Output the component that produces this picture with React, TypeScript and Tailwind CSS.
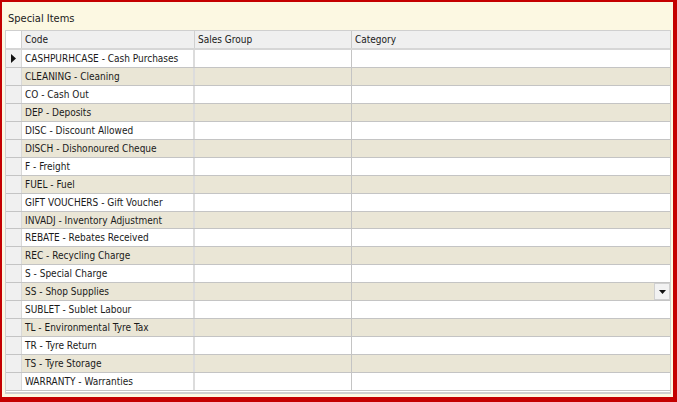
import React from "react";

const ROWS = [
  "CASHPURHCASE - Cash Purchases",
  "CLEANING - Cleaning",
  "CO - Cash Out",
  "DEP - Deposits",
  "DISC - Discount Allowed",
  "DISCH - Dishonoured Cheque",
  "F - Freight",
  "FUEL - Fuel",
  "GIFT VOUCHERS - Gift Voucher",
  "INVADJ - Inventory Adjustment",
  "REBATE - Rebates Received",
  "REC - Recycling Charge",
  "S - Special Charge",
  "SS - Shop Supplies",
  "SUBLET - Sublet Labour",
  "TL - Environmental Tyre Tax",
  "TR - Tyre Return",
  "TS - Tyre Storage",
  "WARRANTY - Warranties",
];

export default function App() {
  return (
    <div
      className="w-[677px] h-[402px] bg-[#c40000] pl-[2px] pt-[2px] pr-[4px] pb-[5px] text-[#1a1a1a]"
      style={{ fontFamily: "'DejaVu Sans Condensed', 'DejaVu Sans', sans-serif" }}
    >
      <div className="h-full w-full bg-[#fcf8e2] flex flex-col px-[3px]">
        <div className="h-[28px] flex items-center pl-[3px] pt-[4px] text-[11px] leading-none">
          Special Items
        </div>
        <div className="w-[666px] h-[364px] border border-[#cfcfcf] bg-white flex flex-col text-[10px] leading-none">
          {/* header */}
          <div className="flex h-[19px] bg-[#efefef] border-b-2 border-[#d6d6d6]">
            <div className="w-[16px] bg-white border-r border-[#d0d0d0]" />
            <div className="w-[173px] flex items-center pl-[3px] pt-[2px] border-r border-[#d0d0d0]">Code</div>
            <div className="w-[157px] flex items-center pl-[3px] pt-[2px] border-r border-[#c8c8c8]">Sales Group</div>
            <div className="flex-1 flex items-center pl-[3px] pt-[2px]">Category</div>
          </div>
          {ROWS.map((r, i) => (
            <div
              key={r}
              className={`flex h-[18px] border-b border-[#c4c4c4] ${i % 2 === 1 ? "bg-[#eae6d6]" : "bg-white"}`}
            >
              <div className="w-[16px] bg-[#f0f0f0] border-r border-[#d8d8d8] flex items-center justify-center">
                {i === 0 && (
                  <svg width="5" height="9" viewBox="0 0 5 9">
                    <path d="M0 0 L5 4.5 L0 9 Z" fill="#111" />
                  </svg>
                )}
              </div>
              <div className="w-[173px] flex items-center pl-[3px] pt-[1px] border-r-2 border-[#dcdcdc] whitespace-nowrap">
                {r}
              </div>
              <div className="w-[157px] border-r border-[#c4c4c4]" />
              <div className="flex-1 flex justify-end">
                {r.startsWith("SS ") && (
                  <div className="w-[16px] h-[17px] bg-[#f2f2f2] border border-[#d0d0d0] flex items-center justify-center">
                    <svg width="7" height="4" viewBox="0 0 7 4">
                      <path d="M0 0 H7 L3.5 4 Z" fill="#111" />
                    </svg>
                  </div>
                )}
              </div>
            </div>
          ))}
          <div className="h-[2px] border-b border-[#cfcfcf]" />
        </div>
      </div>
    </div>
  );
}
